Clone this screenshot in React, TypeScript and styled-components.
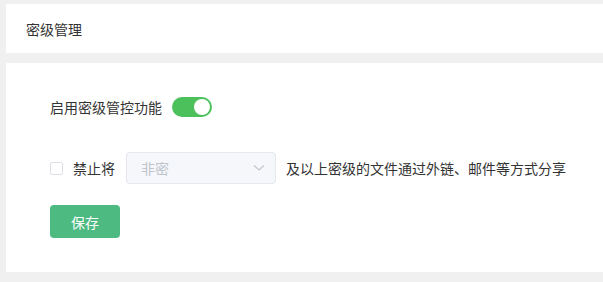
import React from "react";
import styled, { createGlobalStyle } from "styled-components";

const Global = createGlobalStyle`
  html, body { margin: 0; padding: 0; background: #f0f0f0; }
  body { font-family: "Microsoft YaHei", "Noto Sans CJK SC", sans-serif; }
`;

const Page = styled.div`
  width: 603px;
  height: 282px;
  box-sizing: border-box;
  padding: 4px 0 0 6px;
  background: #f0f0f0;
  display: flex;
  flex-direction: column;
  gap: 10px;
`;

const Header = styled.div`
  height: 49px;
  background: #fff;
  display: flex;
  align-items: center;
  padding-left: 20px;
  font-size: 14px;
  color: #333;
`;

const Card = styled.div`
  height: 209px;
  background: #fff;
  box-sizing: border-box;
  padding: 34px 0 0 44px;
  display: flex;
  flex-direction: column;
`;

const Row = styled.div<{ $mb: number }>`
  display: flex;
  align-items: center;
  font-size: 14px;
  color: #333;
  margin-bottom: ${(p) => p.$mb}px;
`;

const Switch = styled.div`
  width: 40px;
  height: 20px;
  border-radius: 10px;
  background: #4cc15b;
  margin-left: 10px;
  position: relative;
  &::after {
    content: "";
    position: absolute;
    right: 2px;
    top: 2px;
    width: 16px;
    height: 16px;
    border-radius: 50%;
    background: #fff;
  }
`;

const Check = styled.span`
  width: 13px;
  height: 13px;
  box-sizing: border-box;
  border: 1px solid #dcdfe6;
  border-radius: 2px;
  background: #fff;
  margin-right: 10px;
`;

const Select = styled.div`
  width: 150px;
  height: 32px;
  box-sizing: border-box;
  border: 1px solid #e4e7ed;
  border-radius: 4px;
  background: #f5f7fa;
  margin: 0 10px 0 11px;
  display: flex;
  align-items: center;
  justify-content: space-between;
  padding: 0 10px 0 14px;
  color: #c0c4cc;
  font-size: 14px;
`;

const Button = styled.button`
  width: 70px;
  height: 33px;
  border: none;
  border-radius: 4px;
  background: #4dba82;
  color: #fff;
  font-size: 14px;
  font-family: inherit;
  padding: 0;
`;

export default function App() {
  return (
    <>
      <Global />
      <Page>
        <Header>密级管理</Header>
        <Card>
          <Row $mb={35}>
            启用密级管控功能
            <Switch />
          </Row>
          <Row $mb={21}>
            <Check />
            禁止将
            <Select>
              <span>非密</span>
              <svg width="12" height="8" viewBox="0 0 12 8">
                <path d="M1 1.5 L6 6 L11 1.5" fill="none" stroke="#c0c4cc" strokeWidth="1.2" />
              </svg>
            </Select>
            及以上密级的文件通过外链、邮件等方式分享
          </Row>
          <div>
            <Button>保存</Button>
          </div>
        </Card>
      </Page>
    </>
  );
}
